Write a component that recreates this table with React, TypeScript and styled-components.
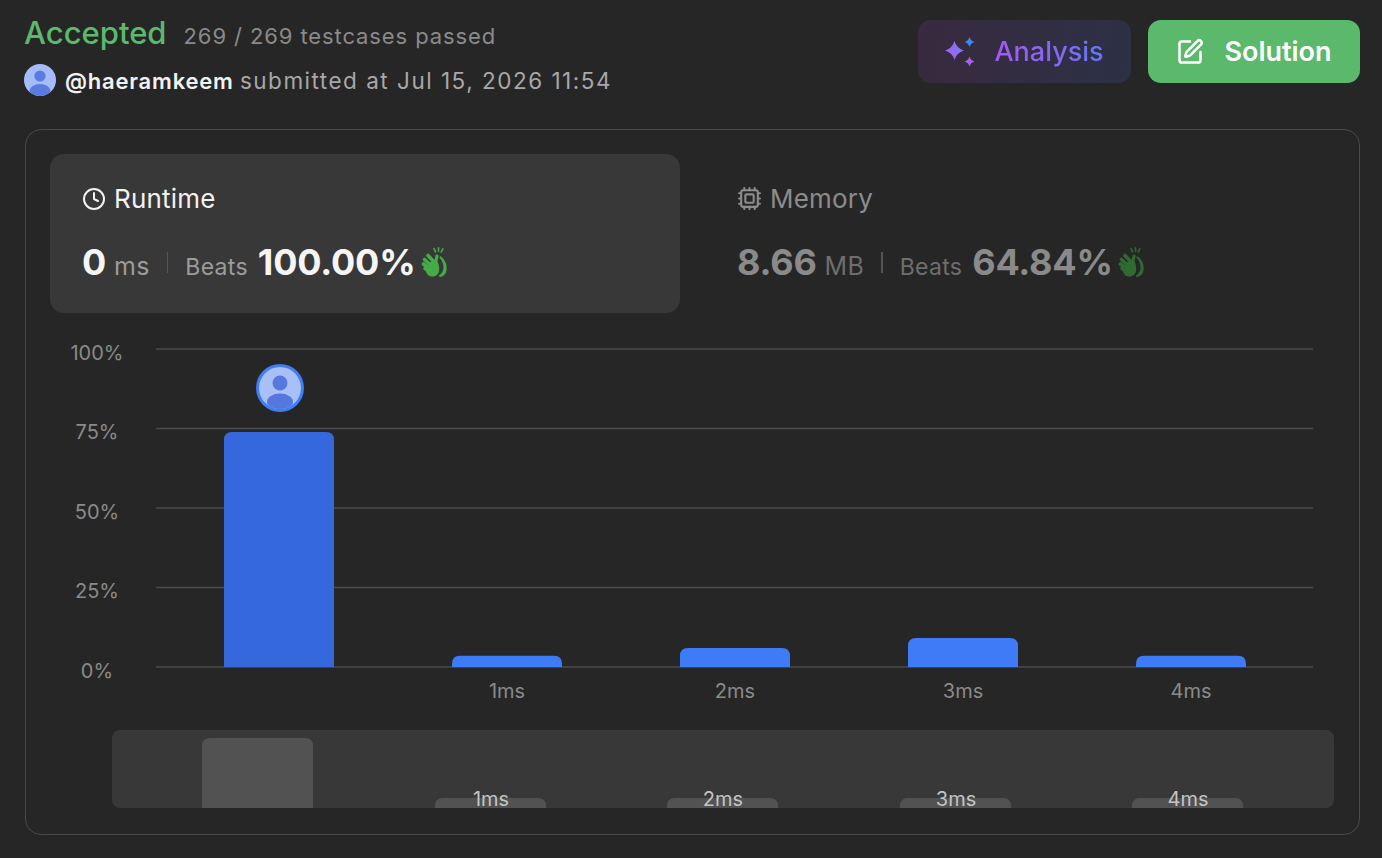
import { FC } from "react";
import styled, { createGlobalStyle } from "styled-components";
import { Clock, Cpu, SquarePen } from "lucide-react";

// data
const runtimeBins = [
  { label: "", pct: 73.9, mine: true },
  { label: "1ms", pct: 3.5, mine: false },
  { label: "2ms", pct: 6.0, mine: false },
  { label: "3ms", pct: 9.1, mine: false },
  { label: "4ms", pct: 3.5, mine: false },
];

const yTicks = [100, 75, 50, 25, 0];

// chart geometry (px inside the chart svg)
const PLOT_LEFT = 106;
const PLOT_RIGHT = 1263;
const PLOT_TOP = 24;
const PLOT_BOTTOM = 342;
const BAR_START = 174;
const BAR_STEP = 228;
const BAR_WIDTH = 110;

const GlobalStyle = createGlobalStyle`
  html, body {
    margin: 0;
    background: #262626;
  }
  body {
    font-family: Inter, "Noto Sans", "Liberation Sans", sans-serif;
    color: #eeeeee;
    -webkit-font-smoothing: antialiased;
  }
`;

const Page = styled.div`
  padding: 16px 22px 23px 24px;
`;

const Header = styled.header`
  display: flex;
  justify-content: space-between;
  align-items: flex-start;
`;

const StatusBlock = styled.div`
  display: flex;
  flex-direction: column;
`;

const StatusLine = styled.div`
  display: flex;
  align-items: baseline;
  height: 34px;
  line-height: 34px;
`;

const Verdict = styled.span`
  font-size: 31px;
  font-weight: 500;
  color: #5ab96a;
`;

const Passed = styled.span`
  margin-left: 17px;
  font-size: 22px;
  letter-spacing: 0.9px;
  color: #8a8a8a;
`;

const SubmitterLine = styled.div`
  display: flex;
  align-items: center;
  gap: 9px;
  margin-top: 14px;
  height: 32px;
  font-size: 22px;
`;

const Handle = styled.span`
  font-weight: 600;
  letter-spacing: 0.8px;
  color: #f2f2f2;
`;

const SubmittedAt = styled.span`
  font-size: 22.5px;
  letter-spacing: 1.5px;
  color: #a8a8a8;
`;

const Actions = styled.div`
  display: flex;
  gap: 17px;
  margin-top: 4px;
`;

const ActionButton = styled.button<{ $variant: "analysis" | "solution" }>`
  display: flex;
  align-items: center;
  justify-content: center;
  gap: ${({ $variant }) => ($variant === "analysis" ? "19px" : "20px")};
  width: ${({ $variant }) => ($variant === "analysis" ? "213px" : "212px")};
  height: 63px;
  border: none;
  border-radius: 13px;
  font-family: inherit;
  font-size: 27px;
  font-weight: ${({ $variant }) => ($variant === "analysis" ? 500 : 600)};
  color: #ffffff;
  background: ${({ $variant }) =>
    $variant === "analysis"
      ? "linear-gradient(100deg, #392a3e 0%, #2c3145 100%)"
      : "#5ab96a"};
  cursor: pointer;
`;

const GradientText = styled.span`
  background: linear-gradient(90deg, #a855f7 0%, #6478f4 100%);
  -webkit-background-clip: text;
  background-clip: text;
  -webkit-text-fill-color: transparent;
`;

const ResultCard = styled.section`
  margin: 33px 0 0 1px;
  border: 1px solid #4a4a4a;
  border-radius: 16px;
  padding: 24px 24px 26px;
`;

const MetricTabs = styled.div`
  display: grid;
  grid-template-columns: 1fr 1fr;
  gap: 25px;
`;

const MetricTab = styled.div<{ $active: boolean }>`
  height: 159px;
  box-sizing: border-box;
  padding: 31px 32px 0;
  border-radius: 14px;
  background: ${({ $active }) => ($active ? "#383838" : "transparent")};
`;

const MetricTitle = styled.div<{ $active: boolean }>`
  display: flex;
  align-items: center;
  gap: 8px;
  height: 27px;
  font-size: 26px;
  letter-spacing: 0.2px;
  color: ${({ $active }) => ($active ? "#f2f2f2" : "#8c8c8c")};
`;

const MetricValues = styled.div`
  display: flex;
  align-items: baseline;
  margin-top: 28px;
  height: 44px;
  line-height: 44px;
`;

const BigNumber = styled.span<{ $active: boolean }>`
  font-size: 36px;
  font-weight: 700;
  letter-spacing: -0.2px;
  color: ${({ $active }) => ($active ? "#f5f5f5" : "#8a8a8a")};
`;

const Unit = styled.span<{ $active: boolean }>`
  margin-left: 8px;
  font-size: 25px;
  letter-spacing: 0.3px;
  color: ${({ $active }) => ($active ? "#9c9c9c" : "#6e6e6e")};
`;

const Divider = styled.span`
  align-self: center;
  width: 1.5px;
  height: 21px;
  margin: 0 17px 0 17px;
  background: #555555;
`;

const BeatsLabel = styled.span<{ $active: boolean }>`
  margin-right: 10px;
  font-size: 23px;
  letter-spacing: 0.3px;
  color: ${({ $active }) => ($active ? "#9c9c9c" : "#6e6e6e")};
`;

const ClapSlot = styled.span`
  align-self: center;
  display: flex;
  margin-left: 5px;
`;

const ChartSvg = styled.svg`
  display: block;
  margin-top: 12px;
  font-family: Inter, "Noto Sans", "Liberation Sans", sans-serif;
`;

const Overview = styled.div`
  margin: 20px 0 0 62px;
  width: 1222px;
  height: 78px;
  border-radius: 8px;
  background: #383838;

  svg {
    display: block;
    overflow: visible;
  }
`;

const roundedTopBar = (x: number, y: number, w: number, h: number, r: number) => {
  const rr = Math.min(r, h, w / 2);
  return `M${x} ${y + h} V${y + rr} Q${x} ${y} ${x + rr} ${y} H${x + w - rr} Q${x + w} ${y} ${x + w} ${y + rr} V${y + h} Z`;
};

const fourPointStar = (cx: number, cy: number, r: number) => {
  const k = r * 0.22;
  return `M${cx} ${cy - r} Q${cx + k} ${cy - k} ${cx + r} ${cy} Q${cx + k} ${cy + k} ${cx} ${cy + r} Q${cx - k} ${cy + k} ${cx - r} ${cy} Q${cx - k} ${cy - k} ${cx} ${cy - r} Z`;
};

const SparkleIcon: FC = () => (
  <svg width="30" height="31" viewBox="0 0 30 31">
    <defs>
      <linearGradient id="sparkBig" x1="0" y1="1" x2="1" y2="0">
        <stop offset="0%" stopColor="#b05cf2" />
        <stop offset="100%" stopColor="#6f7df7" />
      </linearGradient>
    </defs>
    <path d={fourPointStar(9.5, 14.5, 9.5)} fill="url(#sparkBig)" />
    <path d={fourPointStar(24.5, 6, 5)} fill="#3f86f7" />
    <path d={fourPointStar(24.5, 25.5, 5)} fill="#a95ef2" />
  </svg>
);

const ClapIcon: FC<{ color: string }> = ({ color }) => (
  <svg width="28" height="30" viewBox="0 0 28 30">
    <g stroke={color} strokeLinecap="round" fill="none">
      <path d="M13 1.5 L14.5 4.8" strokeWidth="1.6" />
      <path d="M17.5 0.8 L17.5 4.2" strokeWidth="1.6" />
      <path d="M21.8 1.8 L20.2 5" strokeWidth="1.6" />
      <path d="M7 8.5 L13.5 15.5" strokeWidth="3.6" />
      <path d="M3.5 12.5 L10.5 19" strokeWidth="3.6" />
      <path d="M2.5 17 L9.5 22.5" strokeWidth="3.6" />
      <path d="M4 21.5 L10 25.5" strokeWidth="3.6" />
      <path d="M14.8 14.5 L16 9" strokeWidth="3.2" />
    </g>
    <path
      d="M8.5 15.5 L15.5 13 C17.6 16 18.6 20 18.1 23.5 C17.6 27.5 14.6 29.5 11 29.5 C8 29.5 6 27.5 5 25 Z"
      fill={color}
    />
    <path
      d="M19.2 9 C23.6 12 26.2 17 25.6 22.5 C25.1 27 22.6 29.5 19 30 L17.6 28.7 C20.6 27 22.1 24.5 22.4 21.5 C22.7 17 21.1 13 18.3 10.5 Z"
      fill={color}
    />
  </svg>
);

const UserAvatar: FC<{ size: number }> = ({ size }) => (
  <svg width={size} height={size} viewBox="0 0 32 32">
    <defs>
      <clipPath id="headerAvatarClip">
        <circle cx="16" cy="16" r="16" />
      </clipPath>
    </defs>
    <circle cx="16" cy="16" r="16" fill="#a4bdf9" />
    <g clipPath="url(#headerAvatarClip)" fill="#5a7be0">
      <circle cx="16" cy="12" r="5.6" />
      <ellipse cx="16" cy="27" rx="10.5" ry="7" />
    </g>
  </svg>
);

const RuntimeChart: FC = () => {
  const scale = (PLOT_BOTTOM - PLOT_TOP) / 100;
  const mineIndex = runtimeBins.findIndex((b) => b.mine);
  const mineCx = BAR_START + mineIndex * BAR_STEP + BAR_WIDTH / 2 + 1;
  const mineTop = PLOT_BOTTOM - runtimeBins[mineIndex].pct * scale;
  const avatarCy = mineTop - 44;

  return (
    <ChartSvg width="1284" height="385" viewBox="0 0 1284 385">
      <defs>
        <clipPath id="chartAvatarClip">
          <circle cx={mineCx} cy={avatarCy} r="21" />
        </clipPath>
      </defs>
      {yTicks.map((t) => {
        const y = PLOT_BOTTOM - t * scale;
        return (
          <g key={t}>
            <line x1={PLOT_LEFT} x2={PLOT_RIGHT} y1={y} y2={y} stroke="#4b4b4b" strokeWidth="1.5" />
            <text x="47" y={y + 10.5} textAnchor="middle" fontSize="20" fill="#8a8a8a">
              {t}%
            </text>
          </g>
        );
      })}
      {runtimeBins.map((b, i) => {
        const x = BAR_START + i * BAR_STEP;
        const h = b.pct * scale;
        return (
          <g key={i}>
            <path
              d={roundedTopBar(x, PLOT_BOTTOM - h, BAR_WIDTH, h, 8)}
              fill={b.mine ? "#3568dd" : "#3d7cf6"}
            />
            {b.label && (
              <text x={x + BAR_WIDTH / 2} y="373" textAnchor="middle" fontSize="20" fill="#8a8a8a">
                {b.label}
              </text>
            )}
          </g>
        );
      })}
      <circle cx={mineCx} cy={avatarCy} r="24" fill="#3f7ef5" />
      <circle cx={mineCx} cy={avatarCy} r="21" fill="#a8bff8" />
      <g clipPath="url(#chartAvatarClip)" fill="#5677de">
        <circle cx={mineCx} cy={avatarCy - 5} r="7.5" />
        <ellipse cx={mineCx} cy={avatarCy + 14} rx="13" ry="8.5" />
      </g>
    </ChartSvg>
  );
};

const RuntimeOverview: FC = () => (
  <Overview>
    <svg width="1222" height="78" viewBox="0 0 1222 78">
      {runtimeBins.map((b, i) => {
        const x = 90 + Math.round(i * 232.5);
        const top = b.mine ? 8 : 68;
        return (
          <g key={i}>
            <path d={roundedTopBar(x, top, 111, 78 - top, 8)} fill="#525252" />
            {b.label && (
              <text
                x={x + 56}
                y="76"
                textAnchor="middle"
                fontSize="20"
                fill="#c4c4c4"
                fontFamily='Inter, "Noto Sans", sans-serif'
              >
                {b.label}
              </text>
            )}
          </g>
        );
      })}
    </svg>
  </Overview>
);

export default function App() {
  return (
    <>
      <GlobalStyle />
      <Page>
        <Header>
          <StatusBlock>
            <StatusLine>
              <Verdict>Accepted</Verdict>
              <Passed>269 / 269 testcases passed</Passed>
            </StatusLine>
            <SubmitterLine>
              <UserAvatar size={32} />
              <span>
                <Handle>@haeramkeem</Handle>{" "}
                <SubmittedAt>submitted at Jul 15, 2026 11:54</SubmittedAt>
              </span>
            </SubmitterLine>
          </StatusBlock>
          <Actions>
            <ActionButton $variant="analysis">
              <SparkleIcon />
              <GradientText>Analysis</GradientText>
            </ActionButton>
            <ActionButton $variant="solution">
              <SquarePen size={28} strokeWidth={2.2} />
              <span>Solution</span>
            </ActionButton>
          </Actions>
        </Header>

        <ResultCard>
          <MetricTabs>
            <MetricTab $active>
              <MetricTitle $active>
                <Clock size={24} strokeWidth={2} />
                <span>Runtime</span>
              </MetricTitle>
              <MetricValues>
                <BigNumber $active>0</BigNumber>
                <Unit $active>ms</Unit>
                <Divider />
                <BeatsLabel $active>Beats</BeatsLabel>
                <BigNumber $active>100.00%</BigNumber>
                <ClapSlot>
                  <ClapIcon color="#45aa48" />
                </ClapSlot>
              </MetricValues>
            </MetricTab>
            <MetricTab $active={false}>
              <MetricTitle $active={false}>
                <Cpu size={25} strokeWidth={2} />
                <span>Memory</span>
              </MetricTitle>
              <MetricValues>
                <BigNumber $active={false}>8.66</BigNumber>
                <Unit $active={false}>MB</Unit>
                <Divider />
                <BeatsLabel $active={false}>Beats</BeatsLabel>
                <BigNumber $active={false}>64.84%</BigNumber>
                <ClapSlot>
                  <ClapIcon color="#2f6a31" />
                </ClapSlot>
              </MetricValues>
            </MetricTab>
          </MetricTabs>
          <RuntimeChart />
          <RuntimeOverview />
        </ResultCard>
      </Page>
    </>
  );
}
